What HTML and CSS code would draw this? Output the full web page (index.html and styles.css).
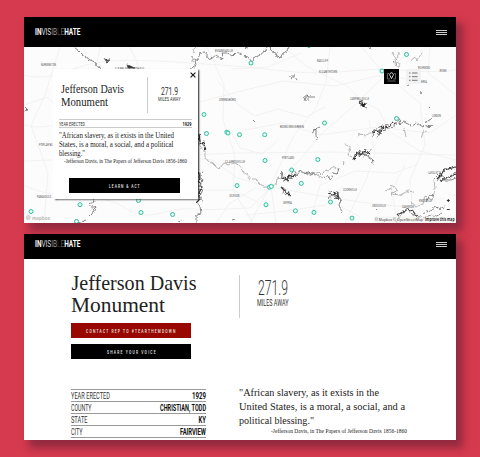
FILE: index.html
```html
<!DOCTYPE html>
<html lang="en">
<head>
<meta charset="utf-8">
<title>Invisible Hate</title>
<link rel="stylesheet" href="styles.css">
</head>
<body>
<main class="stage">
  <section class="screen screen-map">
    <header class="bar">
      <svg class="logo" viewBox="0 0 46 10"><text y="8.300" textLength="45.500" lengthAdjust="spacingAndGlyphs"><tspan class="b">IN</tspan><tspan fill="#ddd">VIS</tspan><tspan fill="#999">IB</tspan><tspan fill="#444">L</tspan><tspan fill="#666">E</tspan><tspan class="b">HATE</tspan></text></svg>
      <div class="menu"><i></i><i></i><i></i></div>
    </header>
    <div class="map">
      <svg class="map-art" viewBox="24 47 432 176">
        <filter id="rough" x="0" y="0" width="1" height="1"><feTurbulence type="fractalNoise" baseFrequency=".35" numOctaves="2" seed="4"/><feDisplacementMap in="SourceGraphic" scale="3.500" xChannelSelector="R" yChannelSelector="G"/></filter>
        <g class="road">
          <path d="M24 75C50 82 65 70 90 64S150 60 220 65S300 76 350 71S420 75 456 70M24 161L240 153L330 152L456 155M24 125C45 132 70 118 90 123M207 47L224 85L223 120L235 155L233 190L253 223M330 47L326 82L315 110L294 135L280 165L268 190L250 223M200 102L245 90L283 81L335 86L377 76L422 80M271 187L310 194L360 202L405 207L456 195M271 187L300 160L320 135L356 104L405 55M271 187L276 223M271 187L237 178L213 160L200 159M24 185C60 204 100 190 125 208S170 203 200 210L250 208L271 187M60 47L45 95L31 126L48 173L44 223M100 47L96 69M130 47L140 69M362 47L382 72L420 103L425 145L410 180L414 223M320 135L378 127L430 133L456 115M245 130L283 123L320 135M345 223L366 180L375 153L369 120M24 105L48 97L58 110M430 47L428 73L456 95M232 69L268 67L301 53M310 222L320 185L356 171L395 173L418 164M205 190L232 190L258 202"/>
          <path d="M284 47L306 66L325 75L347 86L362 101L378 109L390 132L420 151L456 160M218 81L237 104L255 116L278 109L306 117L325 107M246 215L287 211L325 205L343 186M333 202L360 217M216 223L229 204L257 187M397 223L392 190L405 165M230 130L240 148L262 154L277 141"/>
        </g>
        <g class="river" filter="url(#rough)">
          <path d="M74 47L79 51L82 54L85 56L90 60L95 62L97 66L102 69M190 69L196 65L195 61L198 59L200 53L204 52L207 54L207 58L211 59L216 55L220 58L224 59L222 53L228 53L232 56L236 52L240 53L244 56L248 57L252 62L254 58L260 55L265 51L267 47M270 47L272 52L276 53L277 57L280 58L283 53L287 51L289 47"/>
          <path class="soft" d="M191 62L194 60L192 57L195 54L193 50L196 47M198 132L200 136L199 144L202 149L205 151L205 157L208 161L212 163L215 166L219 169L224 163L228 165L235 163L240 166L243 172L248 175L251 179L256 179L260 184L265 187L270 187L276 184L277 179L280 178"/>
          <path class="soft" d="M314 174L319 172L322 175L325 170L329 171L333 166L339 170L345 164L343 161M344 144L350 147L348 155L352 157M358 137L360 133L365 136L370 133L375 132M404 128L406 137M421 139L423 132L427 131M304 172L309 174L314 173L319 176L323 178"/>
          <path d="M281 178L282 172L284 181L289 176L291 179L293 170L297 176L300 170L305 174L307 172L312 175L315 171M323 177L326 179L328 175L331 180L333 173L337 174L339 168"/>
          <path class="bold" d="M280 179L284 177L287 181L289 175L293 177L296 173M199 134L200 141L204 145L206 150M198 171L200 176L199 182L202 187L199 193L201 198L196 203M281 187L284 190L287 192L290 197M328 193L334 195L337 192L339 198L334 199M354 160L357 152L361 155L365 151L370 155M373 133L376 129L380 133L383 126L388 128L392 123L397 124M456 167L444 170L441 175L437 179M456 174L447 178L440 181M398 215L404 211L408 209L413 211L417 217"/>
          <path d="M78 223L86 220L92 214L96 207L91 207L89 204L94 202L93 199M196 203L200 206L201 213L196 216L196 223M202 181L198 176L203 172M196 173L203 179L197 189L203 190L198 199L203 201M281 187L284 188L283 194M289 191L286 195M329 190L332 195L328 198M334 191L336 198L339 192M337 197L341 199L339 205L342 212M312 132L316 129L316 136L317 140M313 130L320 127M353 158L360 150L359 157L366 149L364 157L369 152L371 149M354 155L363 153L372 159L373 164M372 137L374 130L379 135L380 127L385 131L386 124L393 127L398 120L400 117L399 124L404 122L408 124L412 126L417 123L423 127M373 131L382 130L378 137"/>
          <path class="soft" d="M391 185L398 190L391 194L400 195L408 191L414 192M411 201L416 207L423 204L425 196L432 200L435 190L434 178M385 190L392 188M400 52L395 62L400 64L398 68M393 53L397 61M410 61L415 57L417 60L422 53"/>
          <path d="M396 223L400 214L405 212L407 208L412 214L419 217L426 212L431 211L435 206L440 209L446 205M434 179L439 174L443 172L446 168M437 181L441 176L446 179L456 172M440 180L451 180L456 178M400 216L397 211M423 218L431 215L435 217L442 213M426 202L430 195L434 196M425 123L431 119M425 125L432 126L426 127M289 76L295 76L291 79M295 77L297 80M303 98L308 94L308 101M305 101L306 97L314 97M359 103L362 101L363 106L367 108M360 106L365 103L364 107M104 58L106 61L110 59M255 122L253 120M244 47L248 48M367 46L371 48M407 86L409 85M420 92L421 94M429 107L432 110M200 144L205 141M232 220L235 219M178 222L182 221M397 67L393 61M24 111L28 110L25 107M375 208L377 210"/>
          <path class="blob" d="M105 59L109 61L107 62ZM127 65L130 66L135 68L128 68ZM359 102L366 104L363 107Z"/>
        </g>
        <g class="pin">
          <circle cx="251" cy="63" r="2"/><circle cx="406.500" cy="54.500" r="2"/><circle cx="382" cy="71" r="2"/><circle cx="396.500" cy="118.500" r="2"/><circle cx="204" cy="114.500" r="2"/><circle cx="206.500" cy="133.500" r="2"/><circle cx="226.800" cy="132.200" r="2"/><circle cx="228" cy="133" r="2"/><circle cx="239.500" cy="134.700" r="2"/><circle cx="264.700" cy="134.700" r="2"/><circle cx="324.500" cy="123" r="2"/><circle cx="265" cy="160.500" r="2"/><circle cx="317.800" cy="159.500" r="2"/><circle cx="291.600" cy="170" r="2"/><circle cx="301.300" cy="183.400" r="2"/><circle cx="269.500" cy="187.200" r="2"/><circle cx="271.300" cy="186.400" r="2"/><circle cx="237" cy="185.600" r="2"/><circle cx="266" cy="204.800" r="2"/><circle cx="295.400" cy="210.800" r="2"/><circle cx="314" cy="212.400" r="2"/><circle cx="330.500" cy="202" r="2"/><circle cx="352" cy="218.100" r="2"/><circle cx="80" cy="204.700" r="2"/><circle cx="31" cy="211.500" r="2"/><circle cx="141" cy="212.500" r="2"/><circle cx="172.600" cy="214.500" r="2"/><circle cx="138.500" cy="200.500" r="2"/><circle cx="76.500" cy="221.500" r="2"/><circle cx="309" cy="45.500" r="2"/>
        </g>
        <g class="place">
          <text x="41" y="66" textLength="15" lengthAdjust="spacingAndGlyphs">FARMINGTON</text>
          <text x="115" y="69.500" textLength="29" lengthAdjust="spacingAndGlyphs">CAPE GIRARDEAU</text>
          <text x="215" y="51.500" textLength="18" lengthAdjust="spacingAndGlyphs">EVANSVILLE</text>
          <text x="219" y="101" textLength="17" lengthAdjust="spacingAndGlyphs">OWENSBORO</text>
          <text x="317" y="61.500" textLength="11" lengthAdjust="spacingAndGlyphs">RADCLIFF</text>
          <text x="319" y="72.500" textLength="18" lengthAdjust="spacingAndGlyphs">ELIZABETHTOWN</text>
          <text x="350" y="100" textLength="19" lengthAdjust="spacingAndGlyphs">CAMPBELLSVILLE</text>
          <text x="280" y="127.500" textLength="24" lengthAdjust="spacingAndGlyphs">BOWLING GREEN</text>
          <text x="225" y="162.500" textLength="20" lengthAdjust="spacingAndGlyphs">CLARKSVILLE</text>
          <text x="282" y="158.500" textLength="12" lengthAdjust="spacingAndGlyphs">PORTLAND</text>
          <text x="229.500" y="197" textLength="10" lengthAdjust="spacingAndGlyphs">DICKSON</text>
          <text x="283" y="203.500" textLength="9" lengthAdjust="spacingAndGlyphs">SMYRNA</text>
          <text x="343" y="190.500" textLength="14" lengthAdjust="spacingAndGlyphs">COOKEVILLE</text>
          <text x="418" y="68.500" textLength="12" lengthAdjust="spacingAndGlyphs">RICHMOND</text>
          <text x="439.500" y="72" textLength="7" lengthAdjust="spacingAndGlyphs">IRVINE</text>
          <text x="420" y="82.500" textLength="7" lengthAdjust="spacingAndGlyphs">BEREA</text>
          <text x="432" y="116.500" textLength="9" lengthAdjust="spacingAndGlyphs">LONDON</text>
          <text x="39" y="145.500" textLength="18" lengthAdjust="spacingAndGlyphs">POPLAR BLUFF</text>
          <text x="37" y="198" textLength="14" lengthAdjust="spacingAndGlyphs">PARAGOULD</text>
          <text x="428" y="173.500" textLength="13" lengthAdjust="spacingAndGlyphs">LAFOLLETTE</text>
          <text x="372" y="206.500" textLength="14" lengthAdjust="spacingAndGlyphs">CROSSVILLE</text>
          <text x="402" y="207.500" textLength="12" lengthAdjust="spacingAndGlyphs">OAK RIDGE</text>
          <text x="419" y="202" textLength="13" lengthAdjust="spacingAndGlyphs">KNOXVILLE</text>
        </g>
        <rect x="444.500" y="196" width="8" height="18" rx="1" fill="#fff" opacity=".85"/>
        <path d="M446.800 200.500h3M448.300 199v3M446.800 209.500h3" stroke="#222" stroke-width=".9"/>
        <g class="mapbox"><circle cx="28.300" cy="217.500" r="2"/><path d="M27.300 218.500l1-2 1 1z"/><text x="32" y="219.500" textLength="18" lengthAdjust="spacingAndGlyphs">mapbox</text></g>
        <g class="credit"><rect x="374" y="216.500" width="82" height="6.500"/><text x="375" y="221.200" textLength="48" lengthAdjust="spacingAndGlyphs">© Mapbox © OpenStreetMap</text><text class="b" x="425" y="221.200" textLength="29.500" lengthAdjust="spacingAndGlyphs">Improve this map</text></g>
      </svg>

      <div class="views">
        <svg class="view on" viewBox="0 0 15 15"><path d="M5 4.500H3.500v5.500H6M10 4.500h1.500v5.500H9M3.500 12h8"/><path class="pinmark" d="M7.500 9.600L6 6.600A1.800 1.800 0 1 1 9 6.600Z"/></svg>
        <svg class="view" viewBox="0 0 15 15"><path d="M3 4h1.500M6 4h5.500M3 7.700h1.500M6 7.700h5.500M3 11.300h1.500M6 11.300h5.500"/></svg>
      </div>

      <article class="popup">
        <svg class="close" viewBox="0 0 6 6"><path d="M.6.600l4.800 4.800M5.400.6L.6 5.400"/></svg>
        <div class="popup-head">
          <svg class="serif popup-title" viewBox="0 0 64 30"><text y="11.200" textLength="63" lengthAdjust="spacingAndGlyphs">Jefferson Davis</text><text y="24" textLength="47" lengthAdjust="spacingAndGlyphs">Monument</text></svg>
          <svg class="narrow popup-miles" viewBox="0 0 23 18"><text class="n" x="3" y="9" textLength="17" lengthAdjust="spacingAndGlyphs">271.9</text><text class="u" y="14.800" textLength="22.500" lengthAdjust="spacingAndGlyphs">MILES AWAY</text></svg>
        </div>
        <div class="popup-year">
          <svg class="narrow" viewBox="0 0 133 8"><text y="6" textLength="26" lengthAdjust="spacingAndGlyphs">YEAR ERECTED</text><text class="b" x="123.500" y="6" textLength="9" lengthAdjust="spacingAndGlyphs">1929</text></svg>
        </div>
        <svg class="serif popup-quote" viewBox="0 0 133 38"><text y="10" textLength="115" lengthAdjust="spacingAndGlyphs">"African slavery, as it exists in the United</text><text y="18.900" textLength="114.500" lengthAdjust="spacingAndGlyphs">States, is a moral, a social, and a political</text><text y="27.900" textLength="26" lengthAdjust="spacingAndGlyphs">blessing."</text><text class="cite" x="5" y="35.200" textLength="123" lengthAdjust="spacingAndGlyphs">-Jefferson Davis, in The Papers of Jefferson Davis 1856-1860</text></svg>
        <div class="btn popup-btn"><svg width="31" viewBox="0 0 31 8"><text y="6.200" transform="scale(.6 1)" textLength="51">LEARN &amp; ACT</text></svg></div>
      </article>
    </div>
  </section>

  <section class="screen screen-detail">
    <header class="bar">
      <svg class="logo" viewBox="0 0 46 10"><text y="8.300" textLength="45.500" lengthAdjust="spacingAndGlyphs"><tspan class="b">IN</tspan><tspan fill="#ddd">VIS</tspan><tspan fill="#999">IB</tspan><tspan fill="#333">L</tspan><tspan fill="#555">E</tspan><tspan class="b">HATE</tspan></text></svg>
      <div class="menu"><i></i><i></i><i></i></div>
    </header>
    <div class="detail">
      <div class="left">
        <svg class="serif title" viewBox="0 0 136 50"><text x=".5" y="19.300" textLength="125" lengthAdjust="spacingAndGlyphs">Jefferson Davis</text><text y="41.300" textLength="94" lengthAdjust="spacingAndGlyphs">Monument</text></svg>
        <div class="btn red"><svg width="90" viewBox="0 0 90 8"><text y="6.200" transform="scale(.6 1)" textLength="149">CONTACT REP TO #TEARTHEMDOWN</text></svg></div>
        <div class="btn"><svg width="49" viewBox="0 0 49 8"><text y="6.200" transform="scale(.6 1)" textLength="81">SHARE YOUR VOICE</text></svg></div>
        <div class="facts">
          <svg class="narrow row" viewBox="0 0 135 11"><text y="9.400" textLength="39" lengthAdjust="spacingAndGlyphs">YEAR ERECTED</text><text class="b" x="121" y="9.400" textLength="14" lengthAdjust="spacingAndGlyphs">1929</text></svg>
          <svg class="narrow row" viewBox="0 0 135 11"><text y="9.400" textLength="20.500" lengthAdjust="spacingAndGlyphs">COUNTY</text><text class="b" x="89" y="9.400" textLength="46" lengthAdjust="spacingAndGlyphs">CHRISTIAN, TODD</text></svg>
          <svg class="narrow row" viewBox="0 0 135 11"><text y="9.400" textLength="16.500" lengthAdjust="spacingAndGlyphs">STATE</text><text class="b" x="127.500" y="9.400" textLength="7.500" lengthAdjust="spacingAndGlyphs">KY</text></svg>
          <svg class="narrow row" viewBox="0 0 135 11"><text y="9.400" textLength="11.500" lengthAdjust="spacingAndGlyphs">CITY</text><text class="b" x="109" y="9.400" textLength="26" lengthAdjust="spacingAndGlyphs">FAIRVIEW</text></svg>
          <div class="row-end"></div>
        </div>
      </div>
      <div class="right">
        <div class="distance">
          <svg class="narrow" viewBox="0 0 34 36"><text class="n" x="1" y="20" textLength="30" lengthAdjust="spacingAndGlyphs">271.9</text><text class="u" y="31.200" textLength="31.500" lengthAdjust="spacingAndGlyphs">MILES AWAY</text></svg>
        </div>
        <svg class="serif quote" viewBox="0 0 176 54"><text y="12.200" textLength="140" lengthAdjust="spacingAndGlyphs">"African slavery, as it exists in the</text><text y="26" textLength="166" lengthAdjust="spacingAndGlyphs">United States, is a moral, a social, and a</text><text y="39.700" textLength="75" lengthAdjust="spacingAndGlyphs">political blessing."</text><text class="cite" x="32" y="49" textLength="136" lengthAdjust="spacingAndGlyphs">-Jefferson Davis, in The Papers of Jefferson Davis 1856-1860</text></svg>
      </div>
    </div>
  </section>
</main>
</body>
</html>
```

FILE: styles.css
```css
* { box-sizing: border-box; }
body { margin: 0; background: #d63a4e; }
svg { display: block; overflow: visible; }
.stage {
  width: 480px; height: 457px; padding: 17px 24px; overflow: hidden;
  display: flex; flex-direction: column; gap: 11px;
}
.screen { width: 432px; background: #fff; box-shadow: 6px 7px 8px 1px rgba(80, 25, 50, .5); }
.screen-map { height: 206px; flex: none; }
.screen-detail { height: 206px; flex: none; }
.bar {
  height: 30px; background: #000; padding: 0 9px 0 11px;
  display: flex; align-items: center; justify-content: space-between;
}
.screen-detail .bar { height: 25px; padding-bottom: 5px; }
.logo { width: 46px; height: 10px; font: 400 9.5px "Roboto", sans-serif; fill: #fff; }
.b { font-weight: 700; }
.menu { width: 11px; display: flex; flex-direction: column; gap: 1px; }
.menu i { height: 1px; background: #ccc; }

.map { position: relative; height: 176px; background: #fcfcfc; }
.map-art { width: 432px; height: 176px; overflow: hidden; }
.road { fill: none; stroke: #efefef; stroke-width: .8; }
.river { fill: none; stroke: #555; stroke-width: .7; stroke-linejoin: round; }
.river .soft { stroke: #888; stroke-width: .6; }
.river .bold { stroke: #333; stroke-width: 1.2; }
.river .blob { fill: #222; }
.pin { fill: #e9fbf6; stroke: #2dbf9f; stroke-width: 1; }
.place { font: 400 3.6px "Roboto", sans-serif; fill: #555; }
.mapbox { fill: none; stroke: #aaa; stroke-width: .6; }
.mapbox text { font: 700 5.5px "Open Sans", sans-serif; fill: #bbb; stroke: none; }
.credit rect { fill: #f2f2f0; opacity: .7; }
.credit text { font-family: "Open Sans", sans-serif; font-size: 4.3px; fill: #333; }

.views { position: absolute; left: 360px; top: 22px; display: flex; gap: 7px; }
.view { width: 15px; height: 15px; background: #f2f2f2; fill: none; stroke: #555; stroke-width: .8; }
.view.on { background: #000; stroke: #888; stroke-width: .7; }
.view .pinmark { stroke: #eee; stroke-width: .9; }

.popup {
  position: absolute; left: 29px; top: 22px; width: 145px; height: 130px;
  background: #fff; box-shadow: 1.5px 1px 1.5px rgba(0, 0, 0, .65);
  padding: 8px 6px 0;
}
.close { position: absolute; right: 2.5px; top: 2.5px; width: 6px; height: 6px; stroke: #111; stroke-width: 1.1; }
.serif { font-family: "Liberation Serif", serif; fill: #222; }
.narrow { font-family: "Roboto", sans-serif; font-weight: 400; fill: #333; }
.narrow .b { font-weight: 700; fill: #111; }
.popup-head { display: flex; padding-left: 2px; height: 42px; }
.popup-title { width: 64px; height: 30px; margin: 5px 22px 0 0; font-size: 11.5px; }
.popup-miles { width: 34px; height: 36px; padding: 9px 0 9px 10px; border-left: 1px solid #ccc; }
.popup-miles .n { font-size: 11.5px; }
.popup-miles .u { font-size: 6px; }
.popup-year { height: 9px; border-top: 1px solid #ccc; border-bottom: 1px solid #ccc; }
.popup-year svg { width: 133px; height: 8px; font-size: 6px; }
.popup-quote { width: 133px; height: 38px; font-size: 7.8px; }
.popup-quote .cite { font-size: 5.4px; }
.btn { width: 120px; height: 15px; background: #000; display: flex; align-items: center; justify-content: center; }
.btn svg { height: 8px; flex: none; }
.btn text { font: 500 5.6px "Roboto", sans-serif; fill: #eee; }
.popup-btn { width: 111px; margin: 12px 0 0 10px; }

.detail { height: 181px; padding: 12px 47px 0; display: flex; gap: 33px; overflow: hidden; }
.left { width: 135px; }
.title { width: 136px; height: 50px; font-size: 21px; margin-bottom: 2px; }
.btn + .btn { margin-top: 6px; }
.btn.red { background: #980700; }
.facts { margin-top: 30px; }
.row { width: 135px; height: 12px; border-top: 1px solid #999; font-size: 9px; }
.row-end { border-top: 1px solid #999; }
.right { width: 176px; }
.distance { margin: 4px 0 0 0; height: 43px; border-left: 1px solid #ccc; padding-left: 17px; }
.distance svg { width: 34px; height: 36px; }
.distance .n { font-size: 19.5px; font-weight: 300; }
.distance .u { font-size: 9px; }
.quote { width: 176px; height: 54px; margin-top: 66px; font-size: 11px; }
.quote .cite { font-size: 6px; }
```
